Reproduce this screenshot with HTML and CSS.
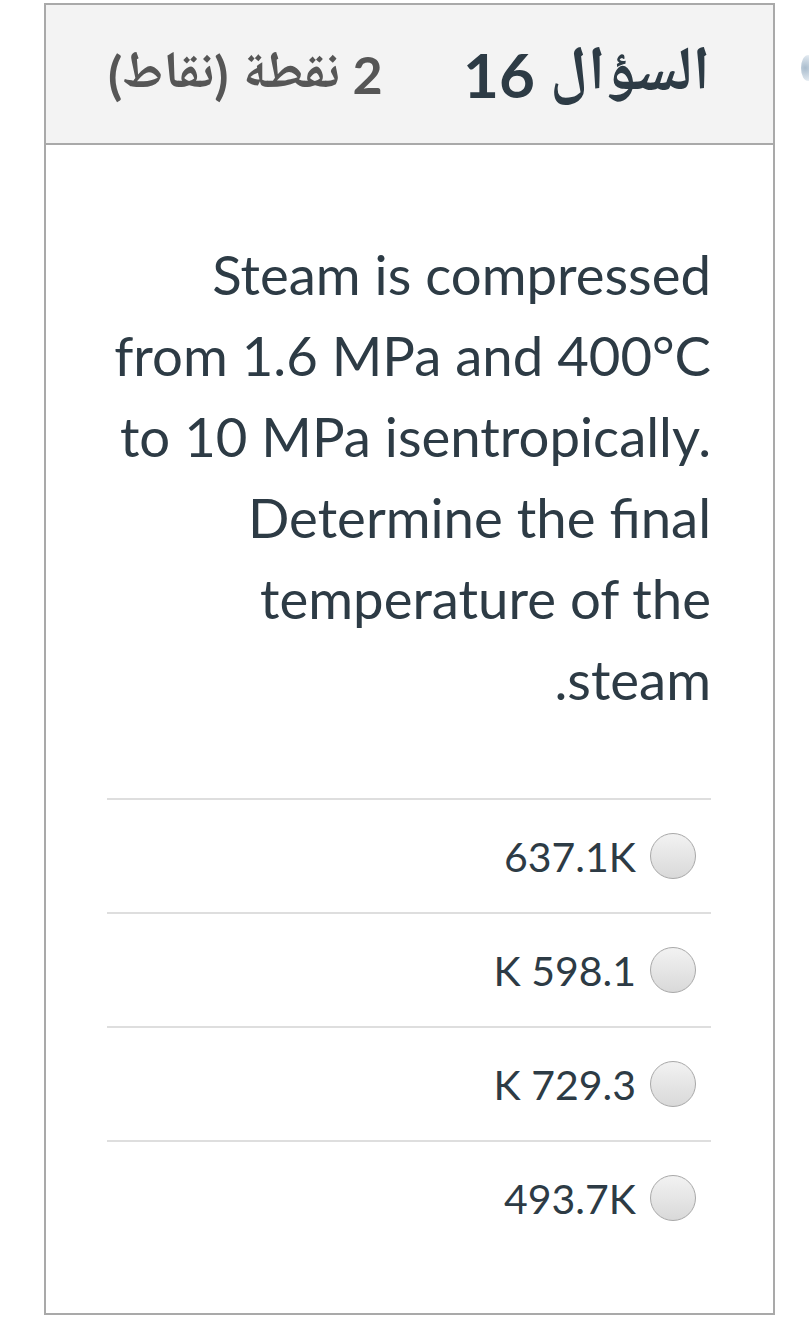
FILE: index.html
```html
<!DOCTYPE html>
<html lang="ar" dir="rtl">
<head>
<meta charset="utf-8">
<title>السؤال 16</title>
<link rel="stylesheet" href="styles.css">
</head>
<body>
<div class="page">
  <div class="question">
    <div class="q-header">
      <h2 class="q-name">السؤال 16</h2>
      <span class="q-points">2 نقطة (نقاط)</span>
    </div>
    <div class="q-body">
      <p class="q-text">Steam is compressed from 1.6 MPa and 400°C to 10 MPa isentropically. Determine the final temperature of the steam.</p>
      <div class="answers">
        <label class="answer"><span class="radio"></span><span class="answer-text">637.1K</span></label>
        <label class="answer"><span class="radio"></span><span class="answer-text">598.1 K</span></label>
        <label class="answer"><span class="radio"></span><span class="answer-text">729.3 K</span></label>
        <label class="answer"><span class="radio"></span><span class="answer-text">493.7K</span></label>
      </div>
    </div>
  </div>
  <span class="side-mark"></span>
</div>
</body>
</html>
```
FILE: styles.css
```css
html, body {
  margin: 0;
  padding: 0;
  background: #ffffff;
}
body {
  font-family: Lato, "Noto Naskh Arabic UI", "Noto Naskh Arabic", "Noto Sans Arabic", "DejaVu Sans", sans-serif;
  color: #2d3b45;
}
.page {
  position: relative;
  width: 809px;
  height: 1318px;
  overflow: hidden;
  direction: ltr;
}
.question {
  direction: rtl;
  box-sizing: border-box;
  width: 731px;
  margin: 3px 0 0 44px;
  border: 2px solid #a9a9a9;
  background: #ffffff;
}
.q-header {
  display: flex;
  align-items: center;
  justify-content: space-between;
  height: 138px;
  padding: 0 63px 0 62px;
  background: #f3f3f3;
  border-bottom: 2px solid #a9a9a9;
}
.q-name {
  margin: 0;
  font-size: 62px;
  font-weight: 700;
  color: #2d3b45;
  line-height: 1;
}
.q-points {
  font-size: 52px;
  font-weight: 700;
  color: #565656;
  line-height: 1;
}
.q-body {
  padding: 89px 62px 59px 61px;
}
.q-text {
  margin: 0 0 78px 0;
  font-size: 54.5px;
  line-height: 81px;
  color: #2d3b45;
}
.answers {
  display: flex;
  flex-direction: column;
}
.answer {
  display: flex;
  align-items: center;
  gap: 14px;
  height: 112px;
  padding: 0 15px 0 0;
  border-top: 2px solid #dedede;
  font-size: 41px;
  color: #2d3b45;
}
.radio {
  box-sizing: border-box;
  width: 46px;
  height: 46px;
  flex: none;
  border-radius: 50%;
  border: 1px solid #a8a8a8;
  background: linear-gradient(#f2f2f2, #d9d9d9);
}
.side-mark {
  position: absolute;
  left: 801px;
  top: 55px;
  width: 14px;
  height: 26px;
  border-radius: 50%;
  background: radial-gradient(circle at 30% 50%, #a9bccd, #dbe4ec 70%, #ffffff);
}
```
